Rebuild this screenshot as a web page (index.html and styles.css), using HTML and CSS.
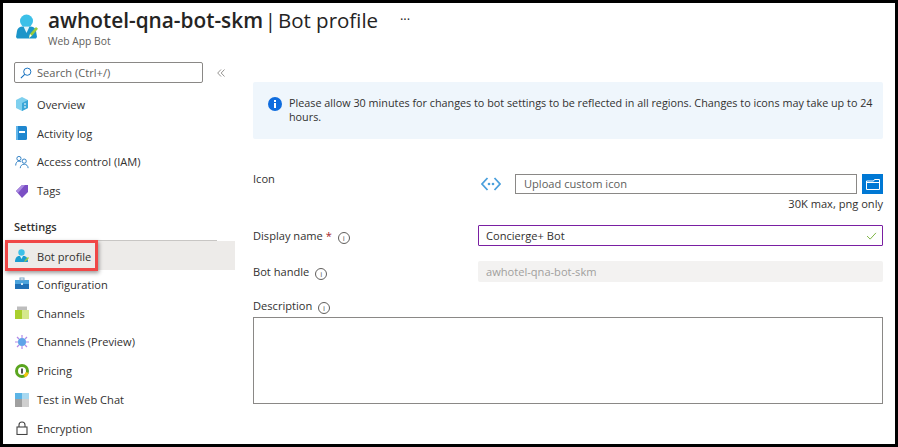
FILE: index.html
```html
<!DOCTYPE html>
<html>
<head>
<meta charset="UTF-8"/>
<title>awhotel-qna-bot-skm | Bot profile</title>
<link rel="stylesheet" href="styles.css">
</head>
<body>
<div class="frame">
  <header class="top">
    <svg class="top-icon" viewBox="0 0 22 25">
      <circle cx="10.500" cy="7" r="6.500" fill="#3cc0e8"/>
      <path d="M0 23l1-6c.5-2.500 2-4 5-4.500h9c3 .5 4.500 2 5 4.500l1 6-1 1.500H1z" fill="#1b95c9"/>
      <path d="M7.500 12.500h6L10.500 19z" fill="#e3f6fc"/>
      <path d="M13 24l1-4 6-7 2 1.800-6 7z" fill="#9ccc3c"/>
      <path d="M13 24l1-4 1.800 1.800z" fill="#fff"/>
    </svg>
    <div class="top-text">
      <h1><span class="name">awhotel-qna-bot-skm</span> | <span class="page">Bot profile</span> <span class="more">···</span></h1>
      <div class="sub">Web App Bot</div>
    </div>
  </header>
  <div class="columns">
    <nav class="side">
      <div class="search-row">
        <div class="search">
          <svg class="search-ico" viewBox="0 0 14 14"><circle cx="8.500" cy="5.500" r="4.200" fill="none" stroke="#0f6cbd" stroke-width="1.100"/><path d="M5.500 8.500L1 13" stroke="#0f6cbd" stroke-width="1.200"/></svg>
          Search (Ctrl+/)
        </div>
        <svg class="collapse" viewBox="0 0 8 8" width="8" height="8"><path d="M4 .5L.7 4 4 7.500M7.500 .5L4.200 4l3.300 3.500" fill="none" stroke="#8a8886" stroke-width=".9"/></svg>
      </div>
      <a class="item">
        <svg class="ico" viewBox="0 0 14 14"><path d="M7 0l6 3v8l-6 3-6-3V3z" fill="#7fd0ee"/><path d="M7 6l6-3v8l-6 3z" fill="#3ba7d8"/><path d="M9 7h2M9 10h2" stroke="#fff"/></svg>
        Overview
      </a>
      <a class="item">
        <svg class="ico" viewBox="0 0 14 14"><rect x="1" y="0" width="11" height="14" rx="1.500" fill="#1f87cf"/><rect x="1" y="0" width="2" height="14" fill="#62b6ea"/><rect x="4" y="5" width="6" height="2" fill="#fff"/></svg>
        Activity log
      </a>
      <a class="item">
        <svg class="ico" viewBox="0 0 16 14"><g fill="none" stroke="#2f7fc4" stroke-width="1.100"><circle cx="4.500" cy="3" r="2.400"/><path d="M.8 11c0-3 1.500-5 3.700-5 1 0 1.800.4 2.400 1"/><circle cx="10.500" cy="6" r="2.400"/><path d="M6 14c0-2.500 2-4.500 4.500-4.500S15 11.500 15 14"/></g></svg>
        Access control (IAM)
      </a>
      <a class="item">
        <svg class="ico" viewBox="0 0 14 14"><path d="M1 7l6-6h6v7l-6 6z" fill="#7b4fc4"/><path d="M1 7l6-6h3L3 9z" fill="#a98ae0"/></svg>
        Tags
      </a>
      <div class="section-title">Settings</div>
      <a class="item current">
        <svg class="ico" viewBox="0 0 14 14"><circle cx="6.500" cy="3.500" r="3.200" fill="#3cc0e8"/><path d="M0 13c0-4 2-6 4-6h5c2 0 4 2 4 6z" fill="#1b9ccf"/><path d="M5 7h3L6.500 10z" fill="#e3f6fc"/><path d="M9 13l1-2 3-3 1 1-3 3z" fill="#9ccc3c"/></svg>
        Bot profile
      </a>
      <a class="item">
        <svg class="ico" viewBox="0 0 14 14"><rect x="0" y="3" width="14" height="9" fill="#1f6fb5"/><rect x="0" y="3" width="14" height="4" fill="#4ba3dc"/><rect x="5" y="1" width="4" height="2" fill="none" stroke="#7aa6c8"/><rect x="6" y="6" width="2" height="2" fill="#cfe8f7"/></svg>
        Configuration
      </a>
      <a class="item">
        <svg class="ico" viewBox="0 0 14 14"><rect x="0" y="4" width="7" height="9" fill="#a9cf2e"/><rect x="7" y="4" width="7" height="9" fill="#d5e88c"/><rect x="2" y=".5" width="10" height="3.500" fill="#bdbdbd"/></svg>
        Channels
      </a>
      <a class="item">
        <svg class="ico" viewBox="0 0 14 14"><circle cx="7" cy="7" r="4" fill="#5ea3e8"/><g stroke="#b48ae8" stroke-width="1.200"><path d="M0 7h3M11 7h3M7 0v3M7 11v3M2 2l2 2M10 10l2 2M12 2l-2 2M4 10l-2 2"/></g></svg>
        Channels (Preview)
      </a>
      <a class="item">
        <svg class="ico" viewBox="0 0 14 14"><circle cx="7" cy="7" r="5.500" fill="#fff" stroke="#5aa51f" stroke-width="3"/><path d="M12.300 8.500a5.500 5.500 0 0 1-3 3.500" fill="none" stroke="#f2c811" stroke-width="3"/><rect x="6" y="4.500" width="2" height="5" fill="#555"/></svg>
        Pricing
      </a>
      <a class="item">
        <svg class="ico" viewBox="0 0 14 14"><rect width="7" height="6" fill="#5bb4e6"/><rect x="7" width="7" height="6" fill="#a8d8f0"/><rect y="6" width="7" height="8" fill="#a0a0a0"/><rect x="7" y="6" width="7" height="8" fill="#cfcfcf"/></svg>
        Test in Web Chat
      </a>
      <a class="item">
        <svg class="ico" viewBox="0 0 14 14"><path d="M4 6V4a3 3 0 0 1 6 0v2" fill="none" stroke="#444" stroke-width="1.100"/><rect x="2" y="6" width="10" height="7.500" fill="none" stroke="#444" stroke-width="1.100"/></svg>
        Encryption
      </a>
      <div class="callout"></div>
    </nav>
    <main class="content">
      <div class="notice">
        <svg class="notice-ico" viewBox="0 0 14 14"><circle cx="7" cy="7" r="7" fill="#0f6cde"/><rect x="6" y="6" width="2" height="5" fill="#fff"/><rect x="6" y="3" width="2" height="2" fill="#fff"/></svg>
        <p>Please allow 30 minutes for changes to bot settings to be reflected in all regions. Changes to icons may take up to 24 hours.</p>
      </div>
      <div class="row row-icon">
        <label class="lbl">Icon</label>
        <div class="val">
          <div class="upload">
            <svg class="bot-ico" viewBox="0 0 20 14"><g fill="none" stroke="#4a9fdc" stroke-width="1.800"><path d="M6.500 1L1 7l5.500 6"/><path d="M13.500 1L19 7l-5.500 6"/></g><circle cx="8" cy="7" r="1.300" fill="#4a9fdc"/><circle cx="12" cy="7" r="1.300" fill="#4a9fdc"/></svg>
            <div class="field upload-field">Upload custom icon</div>
            <div class="browse"><svg viewBox="0 0 14 11" width="14" height="11"><path d="M.5 10.500V2h7l1-1.500h5v10z" fill="none" stroke="#fff"/><path d="M.5 3.500h13" stroke="#fff"/></svg></div>
          </div>
          <div class="hint">30K max, png only</div>
        </div>
      </div>
      <div class="row row-name">
        <label class="lbl">Display name <span class="req">*</span> <i class="tip">i</i></label>
        <div class="field name-field">Concierge+ Bot
          <svg class="check" viewBox="0 0 12 9" width="11" height="8"><path d="M1 4.500l3.500 3.500L11 1" fill="none" stroke="#7cb342" stroke-width="1.100"/></svg>
        </div>
      </div>
      <div class="row row-handle">
        <label class="lbl">Bot handle <i class="tip">i</i></label>
        <div class="field handle-field">awhotel-qna-bot-skm</div>
      </div>
      <label class="lbl desc-lbl">Description <i class="tip">i</i></label>
      <div class="desc"></div>
    </main>
  </div>
</div>
</body>
</html>
```

FILE: styles.css
```css
* {
    box-sizing: border-box;
}
html, body {
    margin: 0;
    height: 100%;
}
body {
    font-family: "Open Sans", "Noto Sans", sans-serif;
    font-size: 11.1px;
    color: #323130;
    overflow: hidden;
}
.frame {
    width: 898px;
    height: 447px;
    border: 3px solid #000;
    overflow: hidden;
    background: #fff;
}
.top {
    display: flex;
    height: 55px;
    padding: 11px 0 0 13px;
}
.top-icon {
    width: 22px;
    height: 25px;
    flex: none;
}
.top-text {
    margin: -8px 0 0 10px;
}
h1 {
    margin: 0;
    font-size: 20.500px;
    line-height: 26px;
    font-weight: 400;
    word-spacing: -3.500px;
    color: #252423;
    white-space: nowrap;
}
.name {
    font-size: 20.800px;
    font-weight: 600;
}
.page {
    word-spacing: 0;
}
.more {
    font-size: 13px;
    margin-left: 20px;
    vertical-align: 4px;
}
.sub {
    font-size: 10.300px;
    color: #605e5c;
    line-height: 14px;
    margin-top: 1px;
}
.columns {
    display: flex;
}
.side {
    position: relative;
    width: 232px;
    flex: none;
}
.search-row {
    display: flex;
    align-items: center;
    padding-left: 11px;
    height: 21px;
    margin-top: 4px;
    margin-bottom: 7px;
}
.search {
    display: flex;
    align-items: center;
    gap: 5px;
    width: 189px;
    height: 21px;
    border: 1px solid #8a8886;
    border-radius: 2px;
    padding-left: 5px;
    color: #605e5c;
}
.search-ico {
    width: 12px;
    height: 12px;
}
.collapse {
    margin-left: 14px;
}
.item {
    display: flex;
    align-items: center;
    height: 28.800px;
    padding-left: 12px;
}
.ico {
    width: 14px;
    height: 14px;
    margin-right: 8px;
    flex: none;
}
.section-title {
    margin: 8px 18px 0 11px;
    height: 27.800px;
    line-height: 27px;
    border-bottom: 1px solid #c8c6c4;
    font-weight: 600;
    font-size: 11px;
}
.current {
    height: 29px;
    margin-left: 2px;
    padding: 2px 0 0 10px;
    background: #edebe9;
}
.callout {
    position: absolute;
    left: 2px;
    top: 182px;
    width: 93px;
    height: 31px;
    border: 3px solid #f04747;
    box-shadow: 1px 2px 4px rgba(0, 0, 0, 0.4);
}
.content {
    flex: 1;
    padding: 24px 12px 0 18px;
}
.notice {
    display: flex;
    height: 57px;
    padding: 15px 8px 0 15px;
    background: #eff6fc;
    border-radius: 2px;
}
.notice-ico {
    width: 14px;
    height: 14px;
    flex: none;
    margin-right: 7px;
}
.notice p {
    margin: -1px 0 0;
    font-size: 10.800px;
    line-height: 14px;
}
.row {
    display: flex;
}
.lbl {
    display: block;
    width: 225px;
    height: 16px;
    flex: none;
    line-height: 16px;
}
.row-icon {
    margin-top: 32px;
}
.row-name {
    margin-top: 14px;
    align-items: center;
}
.row-handle {
    margin-top: 15px;
    align-items: center;
}
.val {
    flex: 1;
}
.upload {
    display: flex;
    align-items: center;
    margin-top: 3px;
}
.bot-ico {
    width: 20px;
    height: 14px;
    margin-left: 3px;
    margin-right: 14px;
}
.field {
    display: flex;
    align-items: center;
    height: 21px;
    padding-left: 8px;
}
.upload-field {
    flex: 1;
    height: 20px;
    padding-bottom: 2px;
    border: 1px solid #8a8886;
    color: #605e5c;
}
.browse {
    display: flex;
    align-items: center;
    justify-content: center;
    width: 21px;
    height: 20px;
    margin-left: 5px;
    background: #0078d4;
}
.hint {
    text-align: right;
    margin-top: 3px;
    line-height: 14px;
}
.name-field {
    flex: 1;
    border: 1px solid #7a1fa2;
    border-radius: 1px;
    justify-content: space-between;
    padding: 0 5px 0 7px;
}
.handle-field {
    flex: 1;
    background: #f3f2f1;
    color: #a19f9d;
    border-radius: 2px;
}
.req {
    color: #a4262c;
}
.tip {
    display: inline-flex;
    align-items: center;
    justify-content: center;
    width: 12px;
    height: 12px;
    margin: -2px 0 -2px 3px;
    border: 1px solid #605e5c;
    border-radius: 50%;
    font-style: normal;
    font-size: 8px;
    line-height: 1;
    color: #605e5c;
    vertical-align: -1px;
}
.desc-lbl {
    margin-top: 16px;
    width: auto;
}
.desc {
    height: 87px;
    margin-top: 3px;
    border: 1px solid #8a8886;
}
```
